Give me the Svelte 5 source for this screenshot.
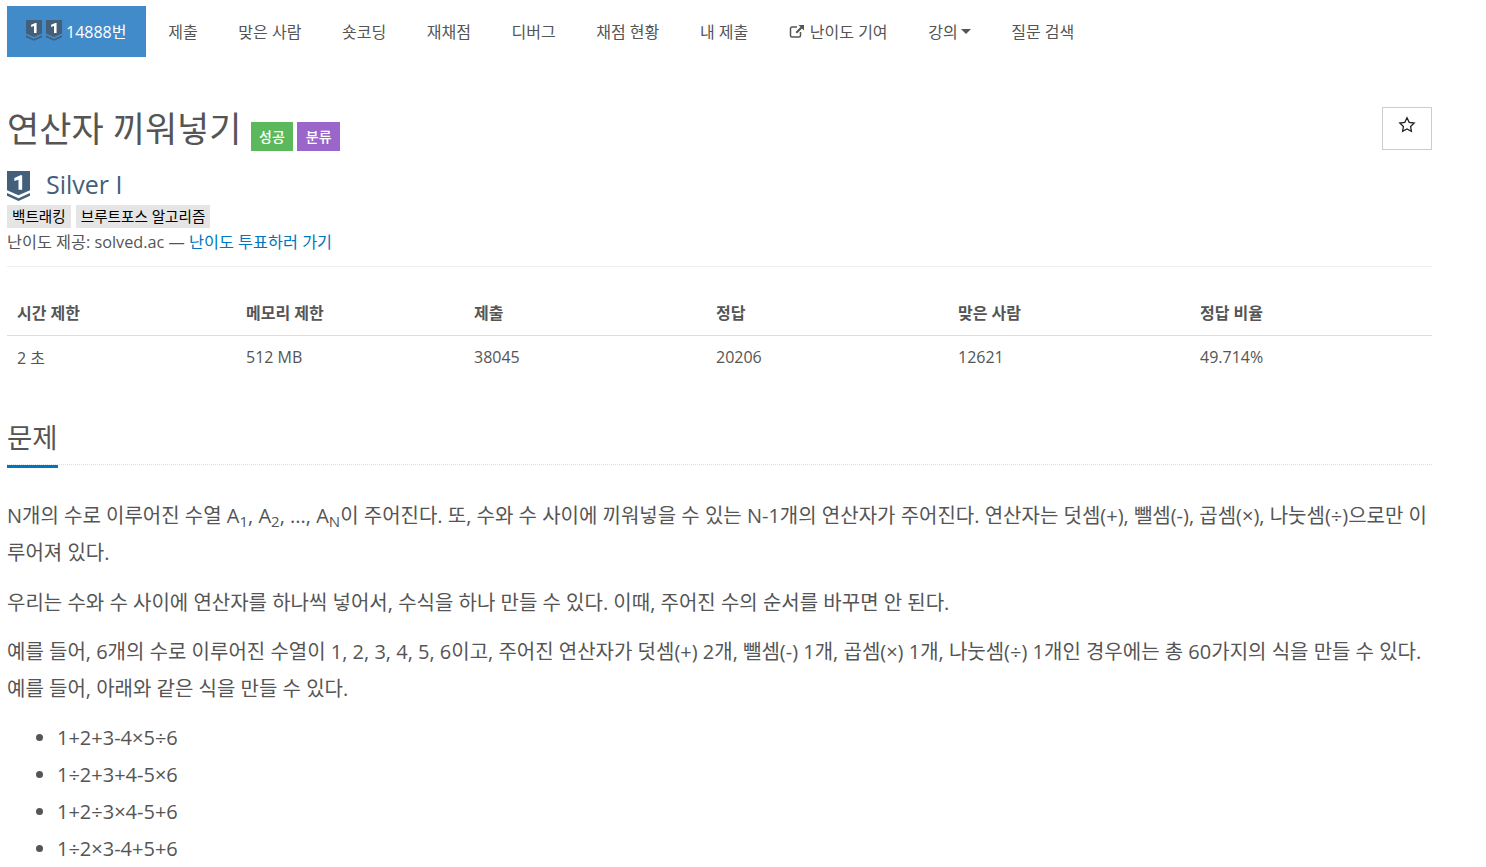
<script lang="ts">
  const navItems = ["제출", "맞은 사람", "숏코딩", "재채점", "디버그", "채점 현황", "내 제출"];
  const headers = ["시간 제한", "메모리 제한", "제출", "정답", "맞은 사람", "정답 비율"];
  const values = ["2 초", "512 MB", "38045", "20206", "12621", "49.714%"];
  const examples = ["1+2+3-4×5÷6", "1÷2+3+4-5×6", "1+2÷3×4-5+6", "1÷2×3-4+5+6"];
</script>

{#snippet tier(size)}
  <svg class="tier" width={size} height={size * 1.3} viewBox="0 0 25 32.5">
    <path d="M0 0H25V21L12.5 26.5L0 21Z" fill="#435f7a" />
    <path d="M0 24L12.5 29.5L25 24V27L12.5 32.5L0 27Z" fill="#435f7a" />
    <path d="M8 7.5L14.5 4.5H16.5V20.5H12.5V9.5L8 11Z" fill="#fff" />
  </svg>
{/snippet}

<div class="page">
  <ul class="nav">
    <li class="active">{@render tier(16)}{@render tier(16)}<span class="num">14888번</span></li>
    {#each navItems as item}
      <li>{item}</li>
    {/each}
    <li>
      <svg class="ext" width="16" height="14" viewBox="0 0 16 14">
        <path d="M11.5 8V11.5A1.5 1.5 0 0 1 10 13H3A1.5 1.5 0 0 1 1.5 11.5V4.5A1.5 1.5 0 0 1 3 3H8" fill="none" stroke="#555" stroke-width="1.5" />
        <path d="M9.5 1H15V6.5L13 4.5L8 9.5L6.5 8L11.5 3Z" fill="#555" />
      </svg>난이도 기여
    </li>
    <li>강의<span class="caret"></span></li>
    <li>질문 검색</li>
  </ul>

  <div class="title-row">
    <h1>연산자 끼워넣기</h1>
    <span class="label green">성공</span>
    <span class="label purple">분류</span>
    <button class="star" aria-label="star">
      <svg width="18" height="17" viewBox="0 0 18 17">
        <path d="M9 1.8L11.2 6.3L16.2 7L12.6 10.5L13.4 15.3L9 13L4.6 15.3L5.4 10.5L1.8 7L6.8 6.3Z" fill="none" stroke="#222" stroke-width="1.3" />
      </svg>
    </button>
  </div>

  <div class="rank">{@render tier(23)}<span>Silver I</span></div>
  <div class="tags">
    <span>백트래킹</span>
    <span>브루트포스 알고리즘</span>
  </div>
  <div class="credit">난이도 제공: solved.ac — <a href="#vote">난이도 투표하러 가기</a></div>

  <table>
    <thead>
      <tr>
        {#each headers as h}<th>{h}</th>{/each}
      </tr>
    </thead>
    <tbody>
      <tr>
        {#each values as v}<td>{v}</td>{/each}
      </tr>
    </tbody>
  </table>

  <div class="headline"><h2>문제</h2></div>

  <div class="problem">
    <p>N개의 수로 이루어진 수열 A<sub>1</sub>, A<sub>2</sub>, ..., A<sub>N</sub>이 주어진다. 또, 수와 수 사이에 끼워넣을 수 있는 N-1개의 연산자가 주어진다. 연산자는 덧셈(+), 뺄셈(-), 곱셈(×), 나눗셈(÷)으로만 이루어져 있다.</p>
    <p>우리는 수와 수 사이에 연산자를 하나씩 넣어서, 수식을 하나 만들 수 있다. 이때, 주어진 수의 순서를 바꾸면 안 된다.</p>
    <p>예를 들어, 6개의 수로 이루어진 수열이 1, 2, 3, 4, 5, 6이고, 주어진 연산자가 덧셈(+) 2개, 뺄셈(-) 1개, 곱셈(×) 1개, 나눗셈(÷) 1개인 경우에는 총 60가지의 식을 만들 수 있다. 예를 들어, 아래와 같은 식을 만들 수 있다.</p>
    <ul>
      {#each examples as ex}<li>{ex}</li>{/each}
    </ul>
  </div>
</div>

<style>
  :global(body) {
    margin: 0;
    background: #fff;
    overflow: hidden;
  }
  .page {
    width: 1425px;
    height: 867px;
    overflow: hidden;
    margin-left: 7px;
    padding-top: 6px;
    box-sizing: border-box;
    font-family: "Open Sans", "Noto Sans CJK KR", sans-serif;
    font-size: 16px;
    color: #555;
  }
  .nav {
    display: flex;
    list-style: none;
    margin: 0;
    padding: 0;
    height: 51px;
  }
  .nav li {
    display: flex;
    align-items: center;
    padding: 0 20.3px 2px;
    font-size: 16px;
  }
  .nav .active {
    background: #428bca;
    color: #fff;
    padding: 0 19.5px 2px 19px;
    gap: 4px;
    margin-right: 2px;
  }
  .ext {
    margin-right: 5px;
  }
  .caret {
    width: 0;
    height: 0;
    margin-left: 3px;
    margin-top: 2px;
    border-top: 5px solid #555;
    border-left: 5px solid transparent;
    border-right: 5px solid transparent;
  }
  .title-row {
    display: flex;
    align-items: flex-end;
    margin-top: 50px;
    height: 44px;
  }
  h1 {
    margin: 0 9px 0 0;
    font-size: 35px;
    font-weight: 400;
    line-height: 44px;
  }
  .label {
    color: #fff;
    font-size: 14px;
    font-weight: 500;
    height: 29px;
    line-height: 29px;
    padding: 0 8.5px;
    margin-right: 4px;
  }
  .green {
    background: #5cb85c;
  }
  .purple {
    background: #9b66c9;
  }
  .star {
    margin-left: auto;
    align-self: flex-start;
    width: 50px;
    height: 43px;
    background: #fff;
    border: 1px solid #ccc;
    padding: 0 0 5px;
  }
  .rank {
    display: flex;
    align-items: center;
    gap: 16px;
    margin-top: 20px;
    height: 30px;
    font-size: 25px;
    color: #435f7a;
  }
  .rank span {
    margin-top: -4px;
  }
  .tags {
    display: flex;
    gap: 5px;
    margin-top: 4px;
  }
  .tags span {
    background: #e5e5e5;
    color: #000;
    font-size: 14.6px;
    line-height: 23px;
    padding: 0 5px;
  }
  .credit {
    font-size: 16.25px;
    line-height: 27px;
    padding-top: 1px;
    padding-bottom: 10px;
    border-bottom: 1px solid #eee;
  }
  a {
    color: #0076c0;
    text-decoration: none;
  }
  table {
    width: 100%;
    border-collapse: collapse;
    margin-top: 24px;
    table-layout: fixed;
  }
  th, td {
    text-align: left;
    padding: 0 10px;
  }
  th {
    height: 44px;
    padding-bottom: 2px;
    box-sizing: border-box;
    font-weight: 700;
    border-bottom: 1px solid #ddd;
  }
  td {
    height: 43px;
    box-sizing: border-box;
  }
  th:nth-child(1) { width: 229px; }
  th:nth-child(2) { width: 228px; }
  th:nth-child(3), th:nth-child(4), th:nth-child(5) { width: 242px; }
  .headline {
    display: flex;
    margin-top: 38px;
    border-bottom: 1px dotted #ddd;
    height: 48px;
  }
  h2 {
    margin: 0;
    font-size: 27.5px;
    font-weight: 400;
    line-height: 44px;
    height: 49px;
    flex: none;
    border-bottom: 3px solid #0076c0;
  }
  .problem {
    margin-top: 32px;
    font-size: 20px;
    line-height: 37px;
    word-break: break-all;
  }
  .problem p {
    margin: 0 0 12.5px;
  }
  sub {
    position: relative;
    bottom: -0.25em;
    vertical-align: baseline;
    font-size: 75%;
    line-height: 0;
  }
  .problem ul {
    margin: -1px 0 0;
    padding-left: 50px;
  }
</style>
